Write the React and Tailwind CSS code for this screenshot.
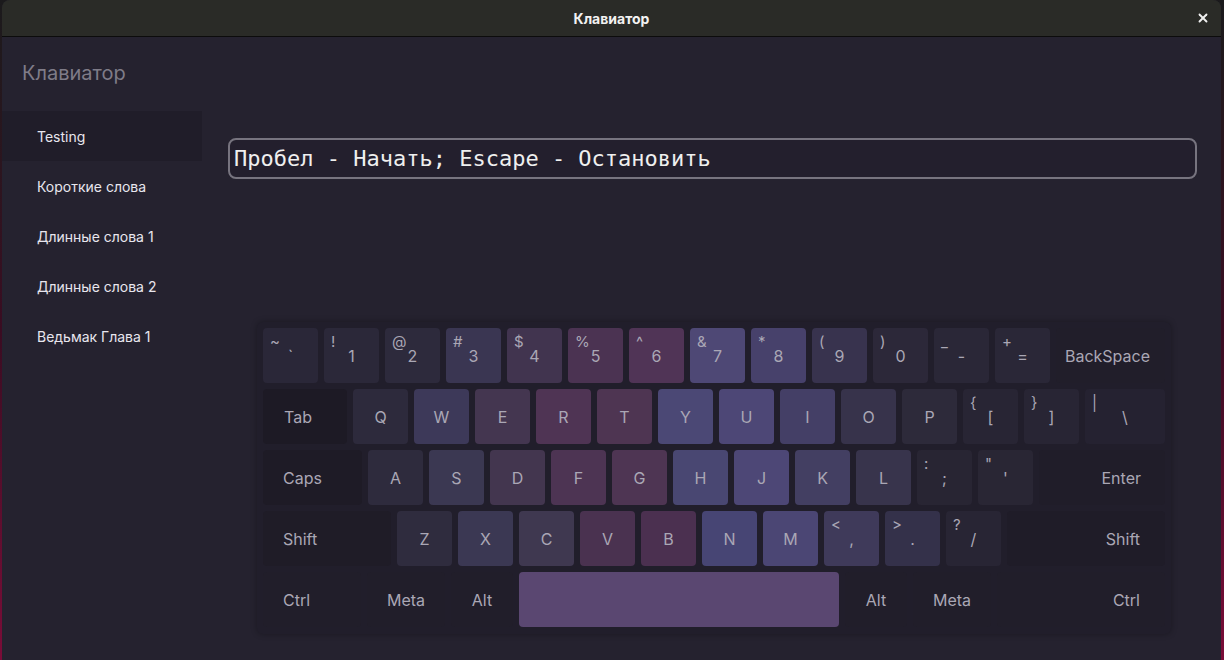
import { X } from 'lucide-react';

const SIDEBAR = ['Testing', 'Короткие слова', 'Длинные слова 1', 'Длинные слова 2', 'Ведьмак Глава 1'];

// heatmap colours taken per key
const ROWS = [
  [
    { m: '`', s: '~', bg: '#2a2738' },
    { m: '1', s: '!', bg: '#2b2839' },
    { m: '2', s: '@', bg: '#2d2a3c' },
    { m: '3', s: '#', bg: '#3a3652' },
    { m: '4', s: '$', bg: '#41344f' },
    { m: '5', s: '%', bg: '#4b3352' },
    { m: '6', s: '^', bg: '#503456' },
    { m: '7', s: '&', bg: '#4e4875' },
    { m: '8', s: '*', bg: '#47416b' },
    { m: '9', s: '(', bg: '#38334e' },
    { m: '0', s: ')', bg: '#2c2839' },
    { m: '-', s: '_', bg: '#2a2737' },
    { m: '=', s: '+', bg: '#2a2737' },
    { m: 'BackSpace', w: 109, bg: '#211e2a', align: 'justify-end pr-[15px]' },
  ],
  [
    { m: 'Tab', w: 84, bg: '#1d1a25', align: 'justify-start pl-[21px]' },
    { m: 'Q', bg: '#2d2a3c' },
    { m: 'W', bg: '#3d3959' },
    { m: 'E', bg: '#443650' },
    { m: 'R', bg: '#4f3454' },
    { m: 'T', bg: '#4e3552' },
    { m: 'Y', bg: '#4b4875' },
    { m: 'U', bg: '#4d4776' },
    { m: 'I', bg: '#443f66' },
    { m: 'O', bg: '#37334b' },
    { m: 'P', bg: '#2d2a3a' },
    { m: '[', s: '{', bg: '#282534' },
    { m: ']', s: '}', bg: '#282534' },
    { m: '\\', s: '|', w: 80, bg: '#252231' },
  ],
  [
    { m: 'Caps', w: 99, bg: '#1e1b26', align: 'justify-start pl-[20px]' },
    { m: 'A', bg: '#2e2b3d' },
    { m: 'S', bg: '#3b3852' },
    { m: 'D', bg: '#43364f' },
    { m: 'F', bg: '#4d3453' },
    { m: 'G', bg: '#4e3553' },
    { m: 'H', bg: '#494772' },
    { m: 'J', bg: '#4d4776' },
    { m: 'K', bg: '#433f62' },
    { m: 'L', bg: '#38344c' },
    { m: ';', s: ':', bg: '#282533' },
    { m: "'", s: '"', bg: '#292634' },
    { m: 'Enter', w: 126, bg: '#201d29', align: 'justify-end pr-[24px]' },
  ],
  [
    { m: 'Shift', w: 128, bg: '#1f1c27', align: 'justify-start pl-[20px]' },
    { m: 'Z', bg: '#2f2c3e' },
    { m: 'X', bg: '#3b3853' },
    { m: 'C', bg: '#3f3850' },
    { m: 'V', bg: '#4a3250' },
    { m: 'B', bg: '#4b3050' },
    { m: 'N', bg: '#474574' },
    { m: 'M', bg: '#4b4674' },
    { m: ',', s: '<', bg: '#3f3a5a' },
    { m: '.', s: '>', bg: '#34314a' },
    { m: '/', s: '?', bg: '#282534' },
    { m: 'Shift', w: 158, bg: '#1f1c28', align: 'justify-end pr-[25px]' },
  ],
  [
    { m: 'Ctrl', w: 98, bg: '#211e2a', align: 'justify-start pl-[20px]' },
    { m: 'Meta', w: 78, bg: '#211e2a' },
    { m: 'Alt', w: 62, bg: '#211e2a' },
    { m: '', w: 320, bg: '#5a4771' },
    { m: 'Alt', w: 62, bg: '#211e2a' },
    { m: 'Meta', w: 78, bg: '#211e2a' },
    { m: 'Ctrl', w: 168, bg: '#211e2a', align: 'justify-end pr-[25px]' },
  ],
];

const Key = ({ k }) => (
  <div
    className={`relative shrink-0 h-[55px] rounded-[4px] flex items-center ${k.align ?? 'justify-center'} text-[16px] text-[#aaa7b5]`}
    style={{ width: k.w ?? 55, background: k.bg }}
  >
    {k.s && <span className="absolute left-[7px] top-[4px] text-[15px] leading-5">{k.s}</span>}
    <span className={k.s ? 'pt-[1px]' : ''}>{k.m}</span>
  </div>
);

export default function App() {
  return (
    <div
      className="w-[1224px] h-[660px] flex bg-gradient-to-b from-[#1b1a1c] via-[#3a0c22] to-[#7a0c38] overflow-hidden"
      style={{ fontFamily: 'Inter, "Noto Sans", sans-serif' }}
    >
      <div className="ml-[2px] mr-[3px] flex-1 flex flex-col rounded-t-[8px] overflow-hidden bg-[#25222f]">
        {/* title bar */}
        <div className="h-[37px] shrink-0 grid grid-cols-[1fr_auto_1fr] items-center bg-[#2a2b27] border-b border-[#0c0c0c]">
          <div />
          <div className="text-[14px] font-bold text-[#f2f2f2]">Клавиатор</div>
          <div className="flex justify-end pr-[11px]">
            <X size={14} strokeWidth={3.2} className="text-[#f0f0f0]" />
          </div>
        </div>

        <div className="flex flex-1">
          {/* sidebar */}
          <div className="w-[200px] shrink-0 flex flex-col">
            <div className="pt-[22px] pl-[20px] text-[20px] leading-7 text-[#7f7c88]">Клавиатор</div>
            <div className="mt-[24px] flex flex-col">
              {SIDEBAR.map((item, i) => (
                <div
                  key={item}
                  className={`h-[50px] flex items-center pl-[35px] text-[14px] text-[#e8e6ee] ${i === 0 ? 'bg-[#201d29]' : ''}`}
                >
                  {item}
                </div>
              ))}
            </div>
          </div>

          {/* main */}
          <div className="flex-1 flex flex-col pl-[26px] pr-[24px]">
            <div className="mt-[101px] h-[41px] rounded-[8px] border-2 border-[#77747f] bg-[#231f2d] flex items-center pl-[4px]">
              <span
                className="text-[22px] text-[#efefef] leading-none"
                style={{ fontFamily: '"DejaVu Sans Mono", monospace' }}
              >
                Пробел - Начать; Escape - Остановить
              </span>
            </div>

            <div className="mt-[143px] ml-[29px] w-[914px] rounded-[6px] bg-[#211e2b] shadow-[0_0_6px_rgba(0,0,0,0.3)] pt-[6px] pb-[7px] px-[6px] flex flex-col gap-[6px]">
              {ROWS.map((row, i) => (
                <div key={i} className="flex gap-[6px]">
                  {row.map((k, j) => (
                    <Key key={j} k={k} />
                  ))}
                </div>
              ))}
            </div>
          </div>
        </div>
      </div>
    </div>
  );
}
